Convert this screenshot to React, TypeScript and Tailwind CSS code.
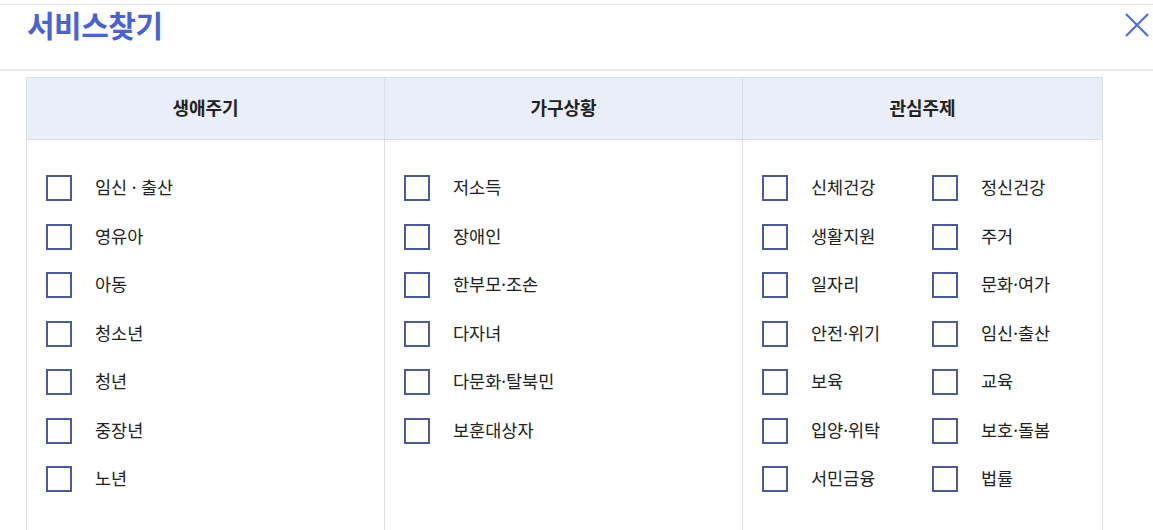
const lifeCycle = ['임신 · 출산', '영유아', '아동', '청소년', '청년', '중장년', '노년']
const household = ['저소득', '장애인', '한부모·조손', '다자녀', '다문화·탈북민', '보훈대상자']
const interest = [
  '신체건강', '정신건강',
  '생활지원', '주거',
  '일자리', '문화·여가',
  '안전·위기', '임신·출산',
  '보육', '교육',
  '입양·위탁', '보호·돌봄',
  '서민금융', '법률',
]

function Check({ label }: { label: string }) {
  return (
    <label className="flex items-center h-[26px] cursor-pointer">
      <span className="w-[26px] h-[26px] border-2 border-[#4a5a9c] bg-white shrink-0" />
      <span className="ml-[23px] text-[17.5px] text-[#222] leading-none">{label}</span>
    </label>
  )
}

export default function App() {
  return (
    <div
      className="w-[1153px] h-[530px] bg-white overflow-hidden"
      style={{ fontFamily: '"Noto Sans", "Noto Sans CJK KR", sans-serif' }}
    >
      <div className="mt-[4px] border-t border-[#e6e6e6]" />
      <div className="flex items-start justify-between h-[64px] pl-[27px] pr-[4px]">
        <h1 className="text-[30px] font-bold text-[#4763d6] leading-none mt-[6px] tracking-[-0.5px]">서비스찾기</h1>
        <button className="mt-[8px] w-[24px] h-[24px]" aria-label="닫기">
          <svg viewBox="0 0 24 24" width="24" height="24" fill="none" stroke="#4f6ee0" strokeWidth="2.2">
            <path d="M1 1L23 23M23 1L1 23" />
          </svg>
        </button>
      </div>
      <div className="border-t-2 border-[#e8e8e8]" />

      <div className="ml-[26px] mt-[6px] w-[1077px] border border-[#dcdfe6] grid grid-cols-[358px_358px_359px]">
        {['생애주기', '가구상황', '관심주제'].map((h, i) => (
          <div
            key={h}
            className={`h-[62px] bg-[#e9eef9] border-b border-[#dcdfe6] flex items-center justify-center text-[18px] font-bold text-[#222] ${i < 2 ? 'border-r' : ''}`}
          >
            {h}
          </div>
        ))}

        <div className="border-r border-[#dcdfe6] h-[420px] pl-[19px] pt-[35px] flex flex-col gap-[22.5px]">
          {lifeCycle.map(t => <Check key={t} label={t} />)}
        </div>
        <div className="border-r border-[#dcdfe6] h-[420px] pl-[19px] pt-[35px] flex flex-col gap-[22.5px]">
          {household.map(t => <Check key={t} label={t} />)}
        </div>
        <div className="h-[420px] pl-[19px] pt-[35px] grid grid-cols-[170px_170px] auto-rows-[26px] gap-y-[22.5px] content-start">
          {interest.map(t => <Check key={t} label={t} />)}
        </div>
      </div>
    </div>
  )
}
